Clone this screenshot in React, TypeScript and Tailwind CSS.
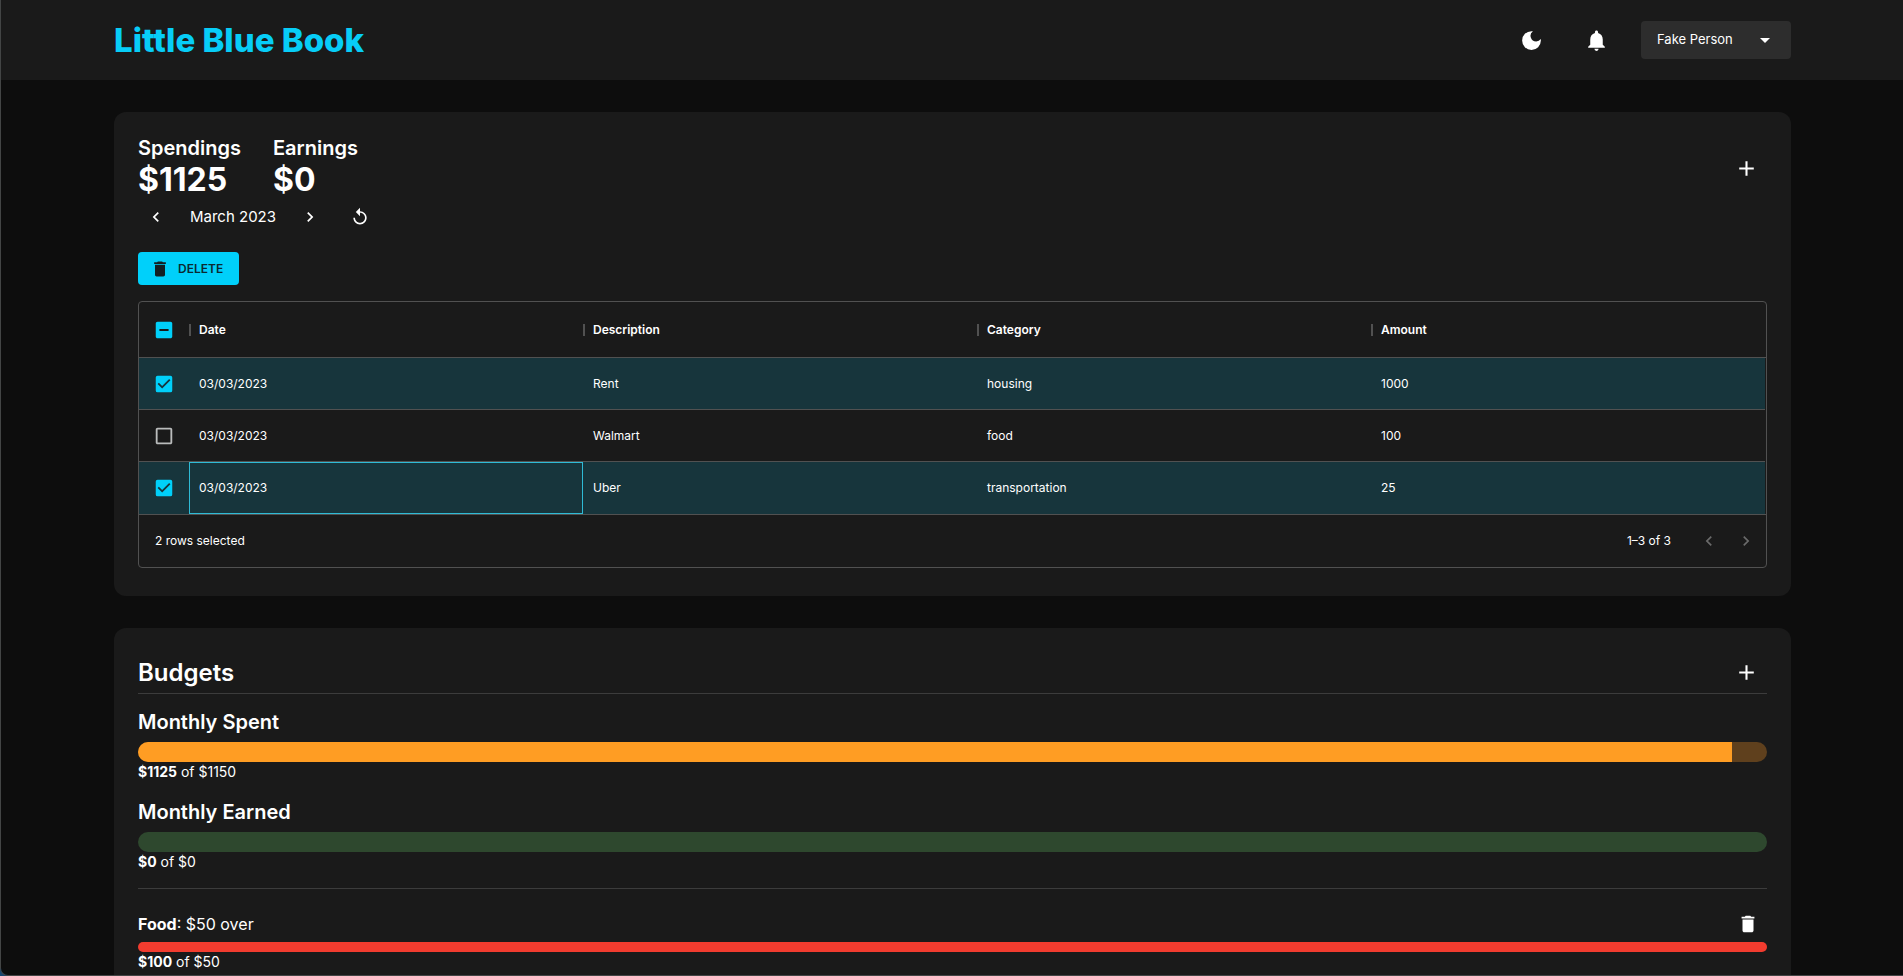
import React from "react";
import {
  MdAdd, MdArrowDropDown, MdCheckBox, MdCheckBoxOutlineBlank, MdDarkMode, MdDelete,
  MdIndeterminateCheckBox, MdKeyboardArrowLeft, MdKeyboardArrowRight, MdNotifications, MdReplay,
} from "react-icons/md";

const columns = ["Date", "Description", "Category", "Amount"];

const rows = [
  { cells: ["03/03/2023", "Rent", "housing", "1000"], selected: true },
  { cells: ["03/03/2023", "Walmart", "food", "100"], selected: false },
  { cells: ["03/03/2023", "Uber", "transportation", "25"], selected: true, focused: 0 },
];

function Tick({ state, label }: { state: "on" | "off" | "mixed"; label: string }) {
  const Icon = state === "on" ? MdCheckBox : state === "mixed" ? MdIndeterminateCheckBox : MdCheckBoxOutlineBlank;
  return (
    <label className="relative mx-auto flex size-[22px] items-center justify-center">
      <input
        type="checkbox"
        aria-label={label}
        defaultChecked={state === "on"}
        className="absolute inset-0 m-0 cursor-pointer opacity-0"
      />
      <Icon className={state === "off" ? "size-[22px] shrink-0 text-[#babcbc]" : "size-[22px] shrink-0 text-[#00d0fa]"} />
    </label>
  );
}

function Bar({ label, percent, track, fill, size }: { label: string; percent: number; track: string; fill: string; size: string }) {
  return (
    <div className={`overflow-hidden rounded-full ${size} ${track}`} role="progressbar" aria-label={label} aria-valuenow={percent}>
      <div className={`h-full ${fill}`} style={{ width: `${percent}%` }} />
    </div>
  );
}

function Caption({ amount, total }: { amount: string; total: string }) {
  return (
    <p className="text-sm leading-5">
      <b className="font-bold">{amount}</b> of {total}
    </p>
  );
}

export default function App() {
  return (
    <div className="h-screen bg-[#17456f]">
      <div className="h-full overflow-y-auto rounded-bl-lg border-b border-l border-[#434545] bg-[#0d0d0d] font-['Inter','Liberation_Sans',sans-serif] text-white [scrollbar-width:none]">
        <header className="flex h-20 items-center justify-between bg-[#1a1a1a] pr-28 pl-[113px]">
          <h1 className="text-[33px] leading-10 font-extrabold text-[#07cdf7]">Little Blue Book</h1>
          <div className="flex items-center">
            <button aria-label="Dark mode" className="mr-10 p-0"><MdDarkMode className="size-[25px]" /></button>
            <button aria-label="Notifications" className="mr-8 p-0"><MdNotifications className="size-[25px]" /></button>
            <button className="flex h-[38px] w-[150px] items-center justify-between rounded bg-[#2d2d2d] pr-3.5 pl-4 text-[13px]">
              Fake Person
              <MdArrowDropDown className="size-6" />
            </button>
          </div>
        </header>

        <main className="flex flex-col gap-8 pt-8 pr-28 pb-8 pl-[113px]">
          <section className="rounded-xl bg-[#1a1a1a] px-6 pt-6 pb-7">
            <div className="flex items-center justify-between">
              <div className="flex gap-8">
                <div>
                  <h2 className="text-xl leading-6 font-semibold">Spendings</h2>
                  <p className="text-[32px] leading-10 font-bold">$1125</p>
                </div>
                <div>
                  <h2 className="text-xl leading-6 font-semibold">Earnings</h2>
                  <p className="text-[32px] leading-10 font-bold">$0</p>
                </div>
              </div>
              <button aria-label="Add transaction" className="mr-2 p-0"><MdAdd className="size-[25px]" /></button>
            </div>
            <div className="flex h-[34px] items-center">
              <button aria-label="Previous month" className="ml-2 p-0"><MdKeyboardArrowLeft className="size-5" /></button>
              <span className="w-[134px] text-center text-[15px]">March 2023</span>
              <button aria-label="Next month" className="p-0"><MdKeyboardArrowRight className="size-5" /></button>
              <button aria-label="Reset month" className="ml-[30px] p-0"><MdReplay className="size-5" /></button>
            </div>
            <button className="mt-[18px] flex h-[33px] items-center gap-2 rounded bg-[#00d0fa] pr-4 pl-3 text-xs font-semibold text-[#0b2a31]">
              <MdDelete className="size-5 text-[#122023]" />
              DELETE
            </button>

            <div className="mt-4 rounded border border-[#515151] text-xs">
              <table className="w-full table-fixed border-separate border-spacing-0 text-left">
                <thead>
                  <tr className="h-14">
                    <th className="w-[50px] border-b border-[#515151] p-0"><Tick state="mixed" label="Select all rows" /></th>
                    {columns.map((c) => (
                      <th key={c} className="border-b border-[#515151] p-0 font-semibold">
                        <div className="flex h-3 items-center gap-2 leading-4">
                          <span className="h-3 w-0.5 bg-[#515151]" />
                          {c}
                        </div>
                      </th>
                    ))}
                    <td className="w-px border-b border-[#515151] p-0" />
                  </tr>
                </thead>
                <tbody>
                  {rows.map((r, i) => (
                    <tr key={i} className={r.selected ? "h-[52px] bg-[#17353c]" : "h-[52px]"}>
                      <td className={i < 2 ? "border-b border-[#515151] p-0" : "p-0"}>
                        <Tick state={r.selected ? "on" : "off"} label={`Select row ${i + 1}`} />
                      </td>
                      {r.cells.map((c, j) => (
                        <td
                          key={j}
                          className={
                            r.focused === j
                              ? "border border-[#2fbbd6] px-[9px] py-0"
                              : i < 2
                                ? "border-b border-[#515151] px-2.5 py-0"
                                : "px-2.5 py-0"
                          }
                        >
                          {c}
                        </td>
                      ))}
                      <td className="bg-[#1a1a1a] p-0" />
                    </tr>
                  ))}
                </tbody>
              </table>
              <div className="flex h-[53px] items-center justify-between border-t border-[#515151] pr-2.5 pl-4">
                <span>2 rows selected</span>
                <div className="flex items-center">
                  <span className="mr-7">1–3 of 3</span>
                  <button disabled aria-label="Previous page" className="mr-[17px] p-0 text-[#6a6a6a]"><MdKeyboardArrowLeft className="size-5" /></button>
                  <button disabled aria-label="Next page" className="p-0 text-[#6a6a6a]"><MdKeyboardArrowRight className="size-5" /></button>
                </div>
              </div>
            </div>
          </section>

          <section className="rounded-xl bg-[#1a1a1a] px-6 pt-6 pb-16">
            <div className="flex h-[42px] items-center justify-between border-b border-[#3c3c3c]">
              <h2 className="text-2xl font-semibold">Budgets</h2>
              <button aria-label="Add budget" className="mr-2 p-0"><MdAdd className="size-[25px]" /></button>
            </div>
            <h3 className="mt-4 mb-2 text-xl leading-6 font-semibold">Monthly Spent</h3>
            <Bar label="Monthly spent" percent={97.83} size="h-5" track="bg-[#5f401d]" fill="bg-[#ff9d23]" />
            <Caption amount="$1125" total="$1150" />
            <h3 className="mt-[18px] mb-2 text-xl leading-6 font-semibold">Monthly Earned</h3>
            <Bar label="Monthly earned" percent={0} size="h-5" track="bg-[#2e482e]" fill="bg-[#4caf50]" />
            <Caption amount="$0" total="$0" />
            <hr className="mt-4 border-[#3c3c3c]" />
            <div className="mt-6 mb-2 flex h-[21px] items-center justify-between">
              <p className="text-base"><b className="font-bold">Food</b>: $50 over</p>
              <button aria-label="Delete Food budget" className="mr-2 p-0"><MdDelete className="size-[22px]" /></button>
            </div>
            <Bar label="Food" percent={100} size="h-2.5" track="bg-[#5d241f]" fill="bg-[#f23c2f]" />
            <Caption amount="$100" total="$50" />
          </section>
        </main>
      </div>
    </div>
  );
}
